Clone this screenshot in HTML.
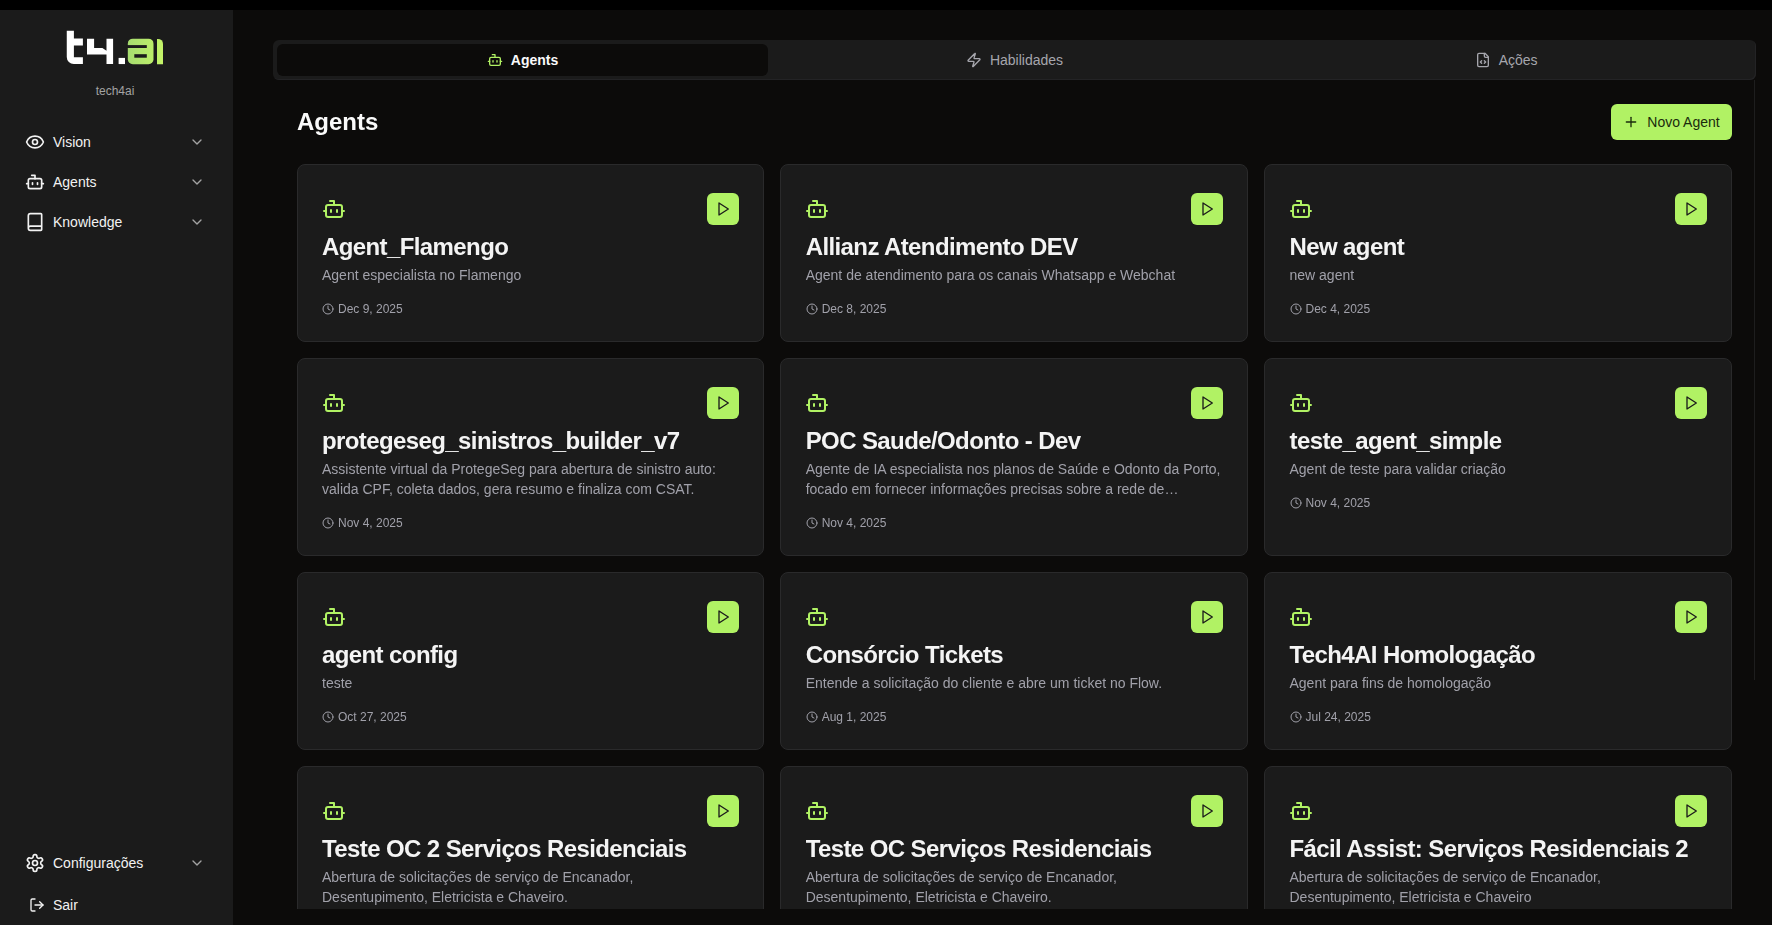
<!DOCTYPE html>
<html><head><meta charset="utf-8">
<style>
*{box-sizing:border-box;margin:0;padding:0}
html,body{width:1772px;height:925px;overflow:hidden;background:#000;font-family:"Liberation Sans",sans-serif;}
svg{display:block}
.ico{fill:none;stroke:currentColor;stroke-width:2;stroke-linecap:round;stroke-linejoin:round}
#side{position:absolute;left:0;top:10px;width:233px;height:915px;background:#1b1b1b}
#main{position:absolute;left:233px;top:10px;width:1539px;height:915px;background:#0c0b0a}
.nav{position:absolute;left:26px;height:20px;width:180px;color:#f2f2f2;font-size:14px}
.nav svg.i{position:absolute;left:-1px;top:0}
.nav span{position:absolute;left:27px;top:2px;line-height:16px}
.nav svg.ch{position:absolute;left:163px;top:2px;color:#a3a3a3}
#tabs{position:absolute;left:40px;top:30px;width:1483px;height:40px;background:#1b1b1b;border-radius:6px;box-shadow:inset -1px -1px 0 #232325}
.tab{position:absolute;top:4px;height:32px;width:491.67px;display:flex;align-items:center;justify-content:center;font-size:14px;color:#a6a6ad}
.tab.act{background:#0c0b0a;border-radius:6px;color:#fafafa;font-weight:bold}
.tab svg{margin-right:8px}
#hdr{will-change:transform;position:absolute;left:64px;top:98px;font-size:24px;font-weight:bold;color:#fafafa;line-height:28px}
#novo{position:absolute;left:1378px;top:94px;width:121px;height:36px;background:#b1f264;border-radius:6px;color:#1a2b0c;font-size:14px;display:flex;align-items:center;justify-content:center}
#novo svg{margin-right:8px}
#grid{position:absolute;left:64px;top:154px;width:1435px;height:745px;overflow:hidden;will-change:transform}
.card{position:absolute;width:468px;background:#1b1b1b;border:1px solid #2a2a2b;border-radius:8px}
.card .bot{position:absolute;left:24px;top:32px;color:#b1f264}
.card .play{position:absolute;right:24px;top:28px;width:32px;height:32px;background:#b1f264;border-radius:6px}
.card .play svg{position:absolute;left:8px;top:8px;color:#1b1b1b}
.card h3{position:absolute;left:24px;top:67px;font-size:24px;font-weight:bold;letter-spacing:-0.6px;color:#f4f4f4;line-height:30px;white-space:nowrap}
.card p{position:absolute;left:24px;top:100px;white-space:nowrap;font-size:14px;line-height:20px;color:#a1a1aa}
.card .dt{position:absolute;left:24px;font-size:12px;line-height:16px;color:#a1a1aa;display:flex;align-items:center}
.card .dt svg{margin-right:4px}
.c1 h3,.c1 p,.c1 .dt{margin-left:0.67px}.c2 h3,.c2 p,.c2 .dt{margin-left:0.5px}
#thumb{position:absolute;left:1521px;top:70px;width:1px;height:600px;background:#1e1e1e}
</style></head><body>
<div id="side">
  <svg style="position:absolute;left:66px;top:20px" width="98" height="36" viewBox="0 0 98 36">
    <defs><linearGradient id="lg" x1="61" y1="0" x2="97" y2="0" gradientUnits="userSpaceOnUse"><stop offset="0" stop-color="#a6dc70"/><stop offset="1" stop-color="#c4f468"/></linearGradient></defs>
    <g fill="#ffffff">
      <path d="M0.76 0.76H7.9V8.6H16.9V15.5H7.9V27.2H16.9V34.06H7.76A7 7 0 0 1 0.76 27.06Z"/>
      <path d="M21 8.8H28.1V17.9H36.4L40.5 20.7V8.8H47.1V34.06H40.5V24.5H21Z"/>
      <path d="M52.6 27.9H59V34.06H52.6Z"/>
    </g>
    <rect x="61.8" y="8.65" width="25.7" height="25.55" rx="5" fill="url(#lg)"/>
    <rect x="60" y="15.1" width="20.8" height="2.9" fill="#1b1b1b"/>
    <rect x="68.3" y="24.2" width="12.5" height="3.5" fill="#1b1b1b"/>
    <path d="M91 8.9H92A5 5 0 0 1 97 13.9V34.2H91Z" fill="url(#lg)"/>
  </svg>
  <div style="position:absolute;left:0;width:230px;top:74px;text-align:center;font-size:12px;line-height:14px;color:#a3a3a3">tech4ai</div>

  <div class="nav" style="top:122px">
    <svg class="i ico" width="20" height="20" viewBox="0 0 24 24"><path d="M2.062 12.348a1 1 0 0 1 0-.696 10.75 10.75 0 0 1 19.876 0 1 1 0 0 1 0 .696 10.75 10.75 0 0 1-19.876 0"/><circle cx="12" cy="12" r="3"/></svg>
    <span>Vision</span>
    <svg class="ch ico" width="16" height="16" viewBox="0 0 24 24"><path d="m6 9 6 6 6-6"/></svg>
  </div>
  <div class="nav" style="top:162px">
    <svg class="i ico" width="20" height="20" viewBox="0 0 24 24"><path d="M12 8V4H8"/><rect width="16" height="12" x="4" y="8" rx="2"/><path d="M2 14h2"/><path d="M20 14h2"/><path d="M15 13v2"/><path d="M9 13v2"/></svg>
    <span>Agents</span>
    <svg class="ch ico" width="16" height="16" viewBox="0 0 24 24"><path d="m6 9 6 6 6-6"/></svg>
  </div>
  <div class="nav" style="top:202px">
    <svg class="i ico" width="20" height="20" viewBox="0 0 24 24"><path d="M4 19.5v-15A2.5 2.5 0 0 1 6.5 2H19a1 1 0 0 1 1 1v18a1 1 0 0 1-1 1H6.5a1 1 0 0 1 0-5H20"/></svg>
    <span>Knowledge</span>
    <svg class="ch ico" width="16" height="16" viewBox="0 0 24 24"><path d="m6 9 6 6 6-6"/></svg>
  </div>

  <div class="nav" style="top:843px">
    <svg class="i ico" width="20" height="20" viewBox="0 0 24 24"><path d="M12.22 2h-.44a2 2 0 0 0-2 2v.18a2 2 0 0 1-1 1.73l-.43.25a2 2 0 0 1-2 0l-.15-.08a2 2 0 0 0-2.73.73l-.22.38a2 2 0 0 0 .73 2.730l.15.1a2 2 0 0 1 1 1.72v.51a2 2 0 0 1-1 1.74l-.15.09a2 2 0 0 0-.73 2.73l.22.38a2 2 0 0 0 2.73.73l.15-.08a2 2 0 0 1 2 0l.43.25a2 2 0 0 1 1 1.73V20a2 2 0 0 0 2 2h.44a2 2 0 0 0 2-2v-.18a2 2 0 0 1 1-1.73l.43-.25a2 2 0 0 1 2 0l.15.08a2 2 0 0 0 2.73-.73l.22-.39a2 2 0 0 0-.73-2.73l-.15-.08a2 2 0 0 1-1-1.74v-.5a2 2 0 0 1 1-1.74l.15-.09a2 2 0 0 0 .73-2.73l-.22-.38a2 2 0 0 0-2.73-.73l-.15.08a2 2 0 0 1-2 0l-.43-.25a2 2 0 0 1-1-1.73V4a2 2 0 0 0-2-2z"/><circle cx="12" cy="12" r="3"/></svg>
    <span>Configurações</span>
    <svg class="ch ico" width="16" height="16" viewBox="0 0 24 24"><path d="m6 9 6 6 6-6"/></svg>
  </div>
  <div class="nav" style="top:885px">
    <svg class="i ico" style="left:3px;top:2px" width="16" height="16" viewBox="0 0 24 24"><path d="M9 21H5a2 2 0 0 1-2-2V5a2 2 0 0 1 2-2h4"/><polyline points="16 17 21 12 16 7"/><line x1="21" x2="9" y1="12" y2="12"/></svg>
    <span>Sair</span>
  </div>
</div>

<div id="main">
  <div id="tabs">
    <div class="tab act" style="left:4px;width:491px">
      <svg class="ico" style="color:#b1f264" width="16" height="16" viewBox="0 0 24 24"><path d="M12 8V4H8"/><rect width="16" height="12" x="4" y="8" rx="2"/><path d="M2 14h2"/><path d="M20 14h2"/><path d="M15 13v2"/><path d="M9 13v2"/></svg>
      Agents
    </div>
    <div class="tab" style="left:495.67px">
      <svg class="ico" width="16" height="16" viewBox="0 0 24 24"><path d="M4 14a1 1 0 0 1-.78-1.630l9.9-10.2a.5.5 0 0 1 .86.46l-1.92 6.02A1 1 0 0 0 13 10h7a1 1 0 0 1 .78 1.63l-9.9 10.2a.5.5 0 0 1-.86-.46l1.92-6.02A1 1 0 0 0 11 14z"/></svg>
      Habilidades
    </div>
    <div class="tab" style="left:987.33px">
      <svg class="ico" width="16" height="16" viewBox="0 0 24 24"><path d="M15 2H6a2 2 0 0 0-2 2v16a2 2 0 0 0 2 2h12a2 2 0 0 0 2-2V7Z"/><path d="M14 2v4a2 2 0 0 0 2 2h4"/><path d="m10 13-2 2 2 2"/><path d="m14 17 2-2-2-2"/></svg>
      Ações
    </div>
  </div>
  <div id="thumb"></div>
  <div id="hdr">Agents</div>
  <div id="novo">
    <svg class="ico" width="16" height="16" viewBox="0 0 24 24"><path d="M5 12h14"/><path d="M12 5v14"/></svg>
    Novo Agent
  </div>
  <div id="grid">
<div class="card c0" style="left:0px;top:0px;width:467px;height:178px"><svg class="bot ico" width="24" height="24" viewBox="0 0 24 24"><path d="M12 8V4H8"/><rect width="16" height="12" x="4" y="8" rx="2"/><path d="M2 14h2"/><path d="M20 14h2"/><path d="M15 13v2"/><path d="M9 13v2"/></svg><div class="play"><svg class="ico" width="16" height="16" viewBox="0 0 24 24"><polygon points="6 3 20 12 6 21 6 3"/></svg></div><h3>Agent_Flamengo</h3><p>Agent especialista no Flamengo</p><div class="dt" style="top:136px"><svg class="ico" width="12" height="12" viewBox="0 0 24 24"><circle cx="12" cy="12" r="10"/><polyline points="12 6 12 12 16 14"/></svg>Dec 9, 2025</div></div>
<div class="card c1" style="left:483px;top:0px;width:468px;height:178px"><svg class="bot ico" width="24" height="24" viewBox="0 0 24 24"><path d="M12 8V4H8"/><rect width="16" height="12" x="4" y="8" rx="2"/><path d="M2 14h2"/><path d="M20 14h2"/><path d="M15 13v2"/><path d="M9 13v2"/></svg><div class="play"><svg class="ico" width="16" height="16" viewBox="0 0 24 24"><polygon points="6 3 20 12 6 21 6 3"/></svg></div><h3>Allianz Atendimento DEV</h3><p>Agent de atendimento para os canais Whatsapp e Webchat</p><div class="dt" style="top:136px"><svg class="ico" width="12" height="12" viewBox="0 0 24 24"><circle cx="12" cy="12" r="10"/><polyline points="12 6 12 12 16 14"/></svg>Dec 8, 2025</div></div>
<div class="card c2" style="left:967px;top:0px;width:468px;height:178px"><svg class="bot ico" width="24" height="24" viewBox="0 0 24 24"><path d="M12 8V4H8"/><rect width="16" height="12" x="4" y="8" rx="2"/><path d="M2 14h2"/><path d="M20 14h2"/><path d="M15 13v2"/><path d="M9 13v2"/></svg><div class="play"><svg class="ico" width="16" height="16" viewBox="0 0 24 24"><polygon points="6 3 20 12 6 21 6 3"/></svg></div><h3>New agent</h3><p>new agent</p><div class="dt" style="top:136px"><svg class="ico" width="12" height="12" viewBox="0 0 24 24"><circle cx="12" cy="12" r="10"/><polyline points="12 6 12 12 16 14"/></svg>Dec 4, 2025</div></div>
<div class="card c0" style="left:0px;top:194px;width:467px;height:198px"><svg class="bot ico" width="24" height="24" viewBox="0 0 24 24"><path d="M12 8V4H8"/><rect width="16" height="12" x="4" y="8" rx="2"/><path d="M2 14h2"/><path d="M20 14h2"/><path d="M15 13v2"/><path d="M9 13v2"/></svg><div class="play"><svg class="ico" width="16" height="16" viewBox="0 0 24 24"><polygon points="6 3 20 12 6 21 6 3"/></svg></div><h3>protegeseg_sinistros_builder_v7</h3><p>Assistente virtual da ProtegeSeg para abertura de sinistro auto:<br>valida CPF, coleta dados, gera resumo e finaliza com CSAT.</p><div class="dt" style="top:156px"><svg class="ico" width="12" height="12" viewBox="0 0 24 24"><circle cx="12" cy="12" r="10"/><polyline points="12 6 12 12 16 14"/></svg>Nov 4, 2025</div></div>
<div class="card c1" style="left:483px;top:194px;width:468px;height:198px"><svg class="bot ico" width="24" height="24" viewBox="0 0 24 24"><path d="M12 8V4H8"/><rect width="16" height="12" x="4" y="8" rx="2"/><path d="M2 14h2"/><path d="M20 14h2"/><path d="M15 13v2"/><path d="M9 13v2"/></svg><div class="play"><svg class="ico" width="16" height="16" viewBox="0 0 24 24"><polygon points="6 3 20 12 6 21 6 3"/></svg></div><h3>POC Saude/Odonto - Dev</h3><p>Agente de IA especialista nos planos de Saúde e Odonto da Porto,<br>focado em fornecer informações precisas sobre a rede de…</p><div class="dt" style="top:156px"><svg class="ico" width="12" height="12" viewBox="0 0 24 24"><circle cx="12" cy="12" r="10"/><polyline points="12 6 12 12 16 14"/></svg>Nov 4, 2025</div></div>
<div class="card c2" style="left:967px;top:194px;width:468px;height:198px"><svg class="bot ico" width="24" height="24" viewBox="0 0 24 24"><path d="M12 8V4H8"/><rect width="16" height="12" x="4" y="8" rx="2"/><path d="M2 14h2"/><path d="M20 14h2"/><path d="M15 13v2"/><path d="M9 13v2"/></svg><div class="play"><svg class="ico" width="16" height="16" viewBox="0 0 24 24"><polygon points="6 3 20 12 6 21 6 3"/></svg></div><h3>teste_agent_simple</h3><p>Agent de teste para validar criação</p><div class="dt" style="top:136px"><svg class="ico" width="12" height="12" viewBox="0 0 24 24"><circle cx="12" cy="12" r="10"/><polyline points="12 6 12 12 16 14"/></svg>Nov 4, 2025</div></div>
<div class="card c0" style="left:0px;top:408px;width:467px;height:178px"><svg class="bot ico" width="24" height="24" viewBox="0 0 24 24"><path d="M12 8V4H8"/><rect width="16" height="12" x="4" y="8" rx="2"/><path d="M2 14h2"/><path d="M20 14h2"/><path d="M15 13v2"/><path d="M9 13v2"/></svg><div class="play"><svg class="ico" width="16" height="16" viewBox="0 0 24 24"><polygon points="6 3 20 12 6 21 6 3"/></svg></div><h3>agent config</h3><p>teste</p><div class="dt" style="top:136px"><svg class="ico" width="12" height="12" viewBox="0 0 24 24"><circle cx="12" cy="12" r="10"/><polyline points="12 6 12 12 16 14"/></svg>Oct 27, 2025</div></div>
<div class="card c1" style="left:483px;top:408px;width:468px;height:178px"><svg class="bot ico" width="24" height="24" viewBox="0 0 24 24"><path d="M12 8V4H8"/><rect width="16" height="12" x="4" y="8" rx="2"/><path d="M2 14h2"/><path d="M20 14h2"/><path d="M15 13v2"/><path d="M9 13v2"/></svg><div class="play"><svg class="ico" width="16" height="16" viewBox="0 0 24 24"><polygon points="6 3 20 12 6 21 6 3"/></svg></div><h3>Consórcio Tickets</h3><p>Entende a solicitação do cliente e abre um ticket no Flow.</p><div class="dt" style="top:136px"><svg class="ico" width="12" height="12" viewBox="0 0 24 24"><circle cx="12" cy="12" r="10"/><polyline points="12 6 12 12 16 14"/></svg>Aug 1, 2025</div></div>
<div class="card c2" style="left:967px;top:408px;width:468px;height:178px"><svg class="bot ico" width="24" height="24" viewBox="0 0 24 24"><path d="M12 8V4H8"/><rect width="16" height="12" x="4" y="8" rx="2"/><path d="M2 14h2"/><path d="M20 14h2"/><path d="M15 13v2"/><path d="M9 13v2"/></svg><div class="play"><svg class="ico" width="16" height="16" viewBox="0 0 24 24"><polygon points="6 3 20 12 6 21 6 3"/></svg></div><h3>Tech4AI Homologação</h3><p>Agent para fins de homologação</p><div class="dt" style="top:136px"><svg class="ico" width="12" height="12" viewBox="0 0 24 24"><circle cx="12" cy="12" r="10"/><polyline points="12 6 12 12 16 14"/></svg>Jul 24, 2025</div></div>
<div class="card c0" style="left:0px;top:602px;width:467px;height:198px"><svg class="bot ico" width="24" height="24" viewBox="0 0 24 24"><path d="M12 8V4H8"/><rect width="16" height="12" x="4" y="8" rx="2"/><path d="M2 14h2"/><path d="M20 14h2"/><path d="M15 13v2"/><path d="M9 13v2"/></svg><div class="play"><svg class="ico" width="16" height="16" viewBox="0 0 24 24"><polygon points="6 3 20 12 6 21 6 3"/></svg></div><h3>Teste OC 2 Serviços Residenciais</h3><p>Abertura de solicitações de serviço de Encanador,<br>Desentupimento, Eletricista e Chaveiro.</p></div>
<div class="card c1" style="left:483px;top:602px;width:468px;height:198px"><svg class="bot ico" width="24" height="24" viewBox="0 0 24 24"><path d="M12 8V4H8"/><rect width="16" height="12" x="4" y="8" rx="2"/><path d="M2 14h2"/><path d="M20 14h2"/><path d="M15 13v2"/><path d="M9 13v2"/></svg><div class="play"><svg class="ico" width="16" height="16" viewBox="0 0 24 24"><polygon points="6 3 20 12 6 21 6 3"/></svg></div><h3>Teste OC Serviços Residenciais</h3><p>Abertura de solicitações de serviço de Encanador,<br>Desentupimento, Eletricista e Chaveiro.</p></div>
<div class="card c2" style="left:967px;top:602px;width:468px;height:198px"><svg class="bot ico" width="24" height="24" viewBox="0 0 24 24"><path d="M12 8V4H8"/><rect width="16" height="12" x="4" y="8" rx="2"/><path d="M2 14h2"/><path d="M20 14h2"/><path d="M15 13v2"/><path d="M9 13v2"/></svg><div class="play"><svg class="ico" width="16" height="16" viewBox="0 0 24 24"><polygon points="6 3 20 12 6 21 6 3"/></svg></div><h3>Fácil Assist: Serviços Residenciais 2</h3><p>Abertura de solicitações de serviço de Encanador,<br>Desentupimento, Eletricista e Chaveiro</p></div>
  </div>
</div>
</body></html>
